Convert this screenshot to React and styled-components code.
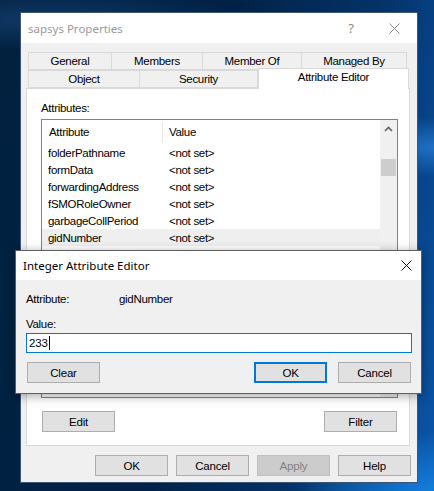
import React from 'react';
import styled, { createGlobalStyle } from 'styled-components';

const GlobalStyle = createGlobalStyle`
  html, body {
    margin: 0;
    padding: 0;
  }
  body {
    font-family: "Liberation Sans", Arial, sans-serif;
    font-size: 11px;
    color: #000;
  }
`;

// only the rows that show above the dialog
const rows = [
  'folderPathname',
  'formData',
  'forwardingAddress',
  'fSMORoleOwner',
  'garbageCollPeriod',
  'gidNumber',
];

const CloseIcon = ({ color }) => (
  <svg width="11" height="11" viewBox="0 0 11 11">
    <path d="M0.5 0.5 L10.5 10.5 M10.5 0.5 L0.5 10.5" stroke={color} strokeWidth="1" fill="none" />
  </svg>
);

const UpArrow = () => (
  <svg width="9" height="6" viewBox="0 0 9 6">
    <path d="M1 5 L4.5 1.5 L8 5" stroke="#606060" strokeWidth="1.6" fill="none" />
  </svg>
);

export default function App() {
  return (
    <>
      <GlobalStyle />
      <Desktop>
        <Window>
          <TitleBar>
            <Title>sapsys Properties</Title>
            <TitleButtons>
              <Help>?</Help>
              <CloseIcon color="#8a8a8a" />
            </TitleButtons>
          </TitleBar>

          <Body>
            <TabStrip>
              <TabRow>
                <Tab $w={84}>General</Tab>
                <Tab $w={91}>Members</Tab>
                <Tab $w={99}>Member Of</Tab>
                <Tab $w={105}>Managed By</Tab>
              </TabRow>
              <TabRow>
                <Tab $w={112}>Object</Tab>
                <Tab $w={118}>Security</Tab>
                <Tab $w={151} $active>Attribute Editor</Tab>
              </TabRow>
            </TabStrip>

            <Panel>
              <Label>Attributes:</Label>
              <ListBox>
                <ListContent>
                  <HeaderRow>
                    <HeaderCell $first>Attribute</HeaderCell>
                    <HeaderCell>Value</HeaderCell>
                  </HeaderRow>
                  {rows.map((name) => (
                    <Row key={name} $selected={name === 'gidNumber'}>
                      <NameCell>{name}</NameCell>
                      <ValueCell>&lt;not set&gt;</ValueCell>
                    </Row>
                  ))}
                </ListContent>
                <ScrollBar>
                  <ScrollBtn>
                    <UpArrow />
                  </ScrollBtn>
                  <Thumb />
                </ScrollBar>
              </ListBox>
              <PanelButtons>
                <Button>Edit</Button>
                <Button>Filter</Button>
              </PanelButtons>
            </Panel>

            <Footer>
              <Button>OK</Button>
              <Button>Cancel</Button>
              <Button $disabled>Apply</Button>
              <Button>Help</Button>
            </Footer>
          </Body>
        </Window>

        <Dialog>
          <DialogTitleBar>
            <DialogTitle>Integer Attribute Editor</DialogTitle>
            <CloseIcon color="#111" />
          </DialogTitleBar>
          <DialogBody>
            <FieldRow>
              <FieldLabel>Attribute:</FieldLabel>
              <span>gidNumber</span>
            </FieldRow>
            <ValueLabel>Value:</ValueLabel>
            <Input>
              233<Caret />
            </Input>
            <DialogButtons>
              <Button>Clear</Button>
              <Spacer />
              <Button $default>OK</Button>
              <Button>Cancel</Button>
            </DialogButtons>
          </DialogBody>
        </Dialog>
      </Desktop>
    </>
  );
}

const Desktop = styled.div`
  position: relative;
  width: 434px;
  height: 491px;
  overflow: hidden;
  background:
    radial-gradient(ellipse 140px 60px at 100% 100%, rgba(20, 130, 225, 0.9), transparent),
    radial-gradient(ellipse 90px 30px at 100% 30%, rgba(40, 130, 220, 0.7), transparent),
    radial-gradient(ellipse 200px 30px at 10% 4%, rgba(30, 80, 140, 0.5), transparent),
    linear-gradient(100deg, #02213f 0%, #012247 45%, #05346b 75%, #0a56aa 100%);
`;

const Window = styled.div`
  position: absolute;
  left: 20px;
  top: 12px;
  width: 398px;
  height: 471px;
  box-sizing: border-box;
  border: 1px solid #3b5573;
  background: #f0f0f0;
  display: flex;
  flex-direction: column;
`;

const TitleBar = styled.div`
  height: 30px;
  background: #fff;
  display: flex;
  align-items: center;
  justify-content: space-between;
  padding: 0 17px 0 7px;
  flex-shrink: 0;
`;

const Title = styled.div`
  font-family: "Noto Sans", "Open Sans", sans-serif;
  font-size: 11.5px;
  color: #999;
  padding-top: 1px;
`;

const TitleButtons = styled.div`
  display: flex;
  align-items: center;
  gap: 35px;
`;

const Help = styled.span`
  font-family: "Noto Sans", sans-serif;
  font-size: 13px;
  color: #8a8a8a;
`;

const Body = styled.div`
  display: flex;
  flex-direction: column;
  padding-top: 9px;
`;

const TabStrip = styled.div`
  margin-left: 7px;
  display: flex;
  flex-direction: column;
`;

const TabRow = styled.div`
  display: flex;
  align-items: flex-end;
  height: 18px;
`;

const Tab = styled.div`
  box-sizing: border-box;
  width: ${(p) => p.$w}px;
  height: ${(p) => (p.$active ? '21px' : '18px')};
  margin-top: ${(p) => (p.$active ? '-2px' : '0')};
  margin-bottom: ${(p) => (p.$active ? '-1px' : '0')};
  background: ${(p) => (p.$active ? '#fff' : '#f0f0f0')};
  border: 1px solid #d9d9d9;
  border-bottom: ${(p) => (p.$active ? 'none' : '1px solid #d9d9d9')};
  border-left: ${(p) => (p.$active ? '1px solid #d9d9d9' : 'none')};
  &:first-child {
    border-left: 1px solid #d9d9d9;
  }
  position: relative;
  z-index: ${(p) => (p.$active ? 2 : 0)};
  display: flex;
  justify-content: center;
  align-items: ${(p) => (p.$active ? 'flex-start' : 'center')};
  padding-top: ${(p) => (p.$active ? '2px' : '0')};
  font-size: 11.5px;
  letter-spacing: -0.3px;
  white-space: nowrap;
`;

const Panel = styled.div`
  margin-left: 5px;
  width: 384px;
  height: 358px;
  box-sizing: border-box;
  border: 1px solid #d9d9d9;
  background: #fff;
  padding: 12px 0 0 14px;
  display: flex;
  flex-direction: column;
`;

const Label = styled.div`
  height: 14px;
  line-height: 14px;
  font-size: 11.5px;
  letter-spacing: -0.3px;
`;

const ListBox = styled.div`
  margin-top: 4px;
  width: 357px;
  height: 279px;
  box-sizing: border-box;
  border: 1px solid #828282;
  display: flex;
  overflow: hidden;
`;

const ListContent = styled.div`
  flex: 1;
  display: flex;
  flex-direction: column;
  overflow: hidden;
`;

const HeaderRow = styled.div`
  height: 25px;
  display: flex;
  align-items: stretch;
  flex-shrink: 0;
`;

const HeaderCell = styled.div`
  box-sizing: border-box;
  width: ${(p) => (p.$first ? '121px' : 'auto')};
  padding-left: ${(p) => (p.$first ? '7px' : '6px')};
  border-right: ${(p) => (p.$first ? '1px solid #e5e5e5' : 'none')};
  margin: 1px 0 2px;
  display: flex;
  align-items: center;
  font-size: 11.5px;
  letter-spacing: -0.3px;
`;

const Row = styled.div`
  height: 17px;
  display: flex;
  align-items: center;
  flex-shrink: 0;
  margin-top: -1px;
  margin-bottom: 1px;
  background: ${(p) => (p.$selected ? '#efefef' : 'transparent')};
  font-size: 11.5px;
  letter-spacing: -0.3px;
`;

const NameCell = styled.div`
  width: 121px;
  padding-left: 6px;
  box-sizing: border-box;
  white-space: nowrap;
`;

const ValueCell = styled.div`
  padding-left: 6px;
`;

const ScrollBar = styled.div`
  width: 17px;
  background: #f0f0f0;
  display: flex;
  flex-direction: column;
  align-items: center;
  flex-shrink: 0;
`;

const ScrollBtn = styled.div`
  height: 17px;
  width: 17px;
  display: flex;
  align-items: center;
  justify-content: center;
`;

const Thumb = styled.div`
  margin-top: 22px;
  width: 15px;
  height: 17px;
  background: #cdcdcd;
`;

const PanelButtons = styled.div`
  margin-top: 13px;
  width: 356px;
  display: flex;
  justify-content: space-between;
  padding-left: 1px;
  box-sizing: border-box;
`;

const Button = styled.div`
  box-sizing: border-box;
  width: 73px;
  height: 21px;
  background: ${(p) => (p.$disabled ? '#cccccc' : '#e1e1e1')};
  border: ${(p) => (p.$default ? '2px' : '1px')} solid;
  border-color: ${(p) => (p.$disabled ? '#bfbfbf' : p.$default ? '#0078d7' : '#adadad')};
  color: ${(p) => (p.$disabled ? '#838383' : '#000')};
  display: flex;
  align-items: center;
  justify-content: center;
  font-size: 11.5px;
  letter-spacing: -0.2px;
  flex-shrink: 0;
`;

const Footer = styled.div`
  margin-top: 9px;
  display: flex;
  justify-content: flex-end;
  gap: 8px;
  padding-right: 6px;
`;

const Dialog = styled.div`
  position: absolute;
  left: 15px;
  top: 250px;
  width: 407px;
  height: 144px;
  box-sizing: border-box;
  border: 1px solid #5e5e5e;
  background: #f0f0f0;
  box-shadow: 0 2px 10px rgba(0, 0, 0, 0.35);
  display: flex;
  flex-direction: column;
  z-index: 5;
`;

const DialogTitleBar = styled.div`
  height: 29px;
  background: #fff;
  display: flex;
  align-items: center;
  justify-content: space-between;
  padding: 0 9px 0 7px;
  flex-shrink: 0;
`;

const DialogTitle = styled.div`
  font-family: "Noto Sans", "Open Sans", sans-serif;
  font-size: 11.5px;
  color: #000;
`;

const DialogBody = styled.div`
  display: flex;
  flex-direction: column;
  padding: 12px 9px 0 10px;
`;

const FieldRow = styled.div`
  height: 14px;
  display: flex;
  align-items: center;
  font-size: 11.5px;
  letter-spacing: -0.3px;
`;

const FieldLabel = styled.span`
  width: 93px;
`;

const ValueLabel = styled.div`
  margin-top: 11px;
  height: 14px;
  line-height: 14px;
  font-size: 11.5px;
  letter-spacing: -0.3px;
`;

const Input = styled.div`
  margin-top: 2px;
  width: 386px;
  height: 20px;
  box-sizing: border-box;
  border: 1px solid #0078d7;
  background: #fff;
  display: flex;
  align-items: center;
  padding-left: 2px;
  font-size: 11.5px;
  letter-spacing: -0.2px;
`;

const Caret = styled.span`
  display: inline-block;
  width: 1px;
  height: 14px;
  background: #000;
  margin-left: 1px;
`;

const DialogButtons = styled.div`
  margin-top: 9px;
  display: flex;
  gap: 11px;
  padding-left: 1px;
  width: 384px;
`;

const Spacer = styled.div`
  flex: 1;
`;
